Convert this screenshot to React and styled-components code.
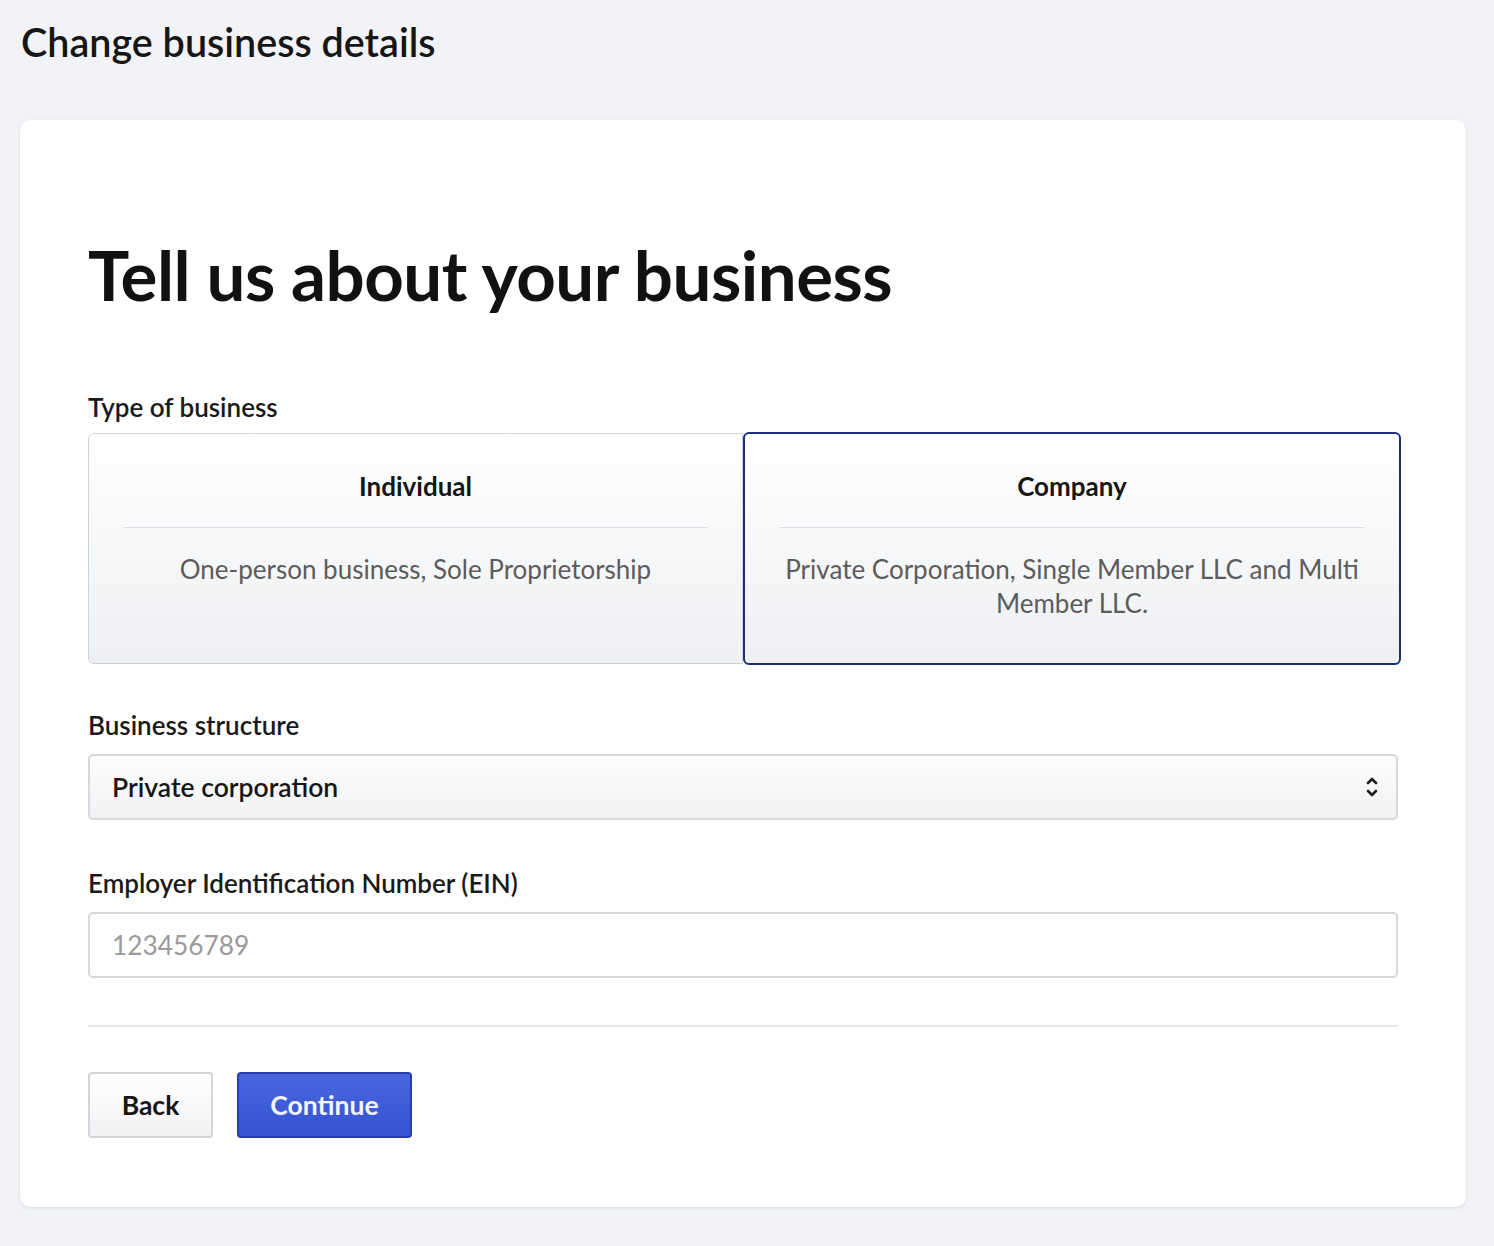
import React, { useState } from 'react';
import styled, { createGlobalStyle } from 'styled-components';

const GlobalStyle = createGlobalStyle`
  html, body {
    margin: 0;
    padding: 0;
    background: #f1f3f6;
    font-family: Lato, "Liberation Sans", sans-serif;
    color: #111;
  }
`;

const Page = styled.div`
  padding: 18px 28px 40px 20px;
`;

const PageTitle = styled.h1`
  margin: 0 0 54px 1px;
  font-size: 39.5px;
  line-height: 48px;
  font-weight: 600;
  color: #161616;
`;

const Card = styled.div`
  background: #fff;
  border-radius: 10px;
  box-shadow: 0 1px 3px rgba(20, 30, 50, 0.12);
  padding: 115px 68px 69px 68px;
`;

const Heading = styled.h2`
  margin: 0 0 76px 0;
  font-size: 69px;
  line-height: 80px;
  font-weight: 700;
  letter-spacing: -0.5px;
  color: #111;
`;

const Label = styled.div`
  font-size: 26px;
  line-height: 32px;
  font-weight: 600;
  color: #1a1a1a;
  margin-bottom: ${p => p.$gap || 13}px;
`;

const Options = styled.div`
  display: grid;
  grid-template-columns: 655px 658px;
  margin-bottom: 44px;
`;

const Option = styled.div`
  height: 231px;
  box-sizing: border-box;
  padding: 37px 34px 0 34px;
  text-align: center;
  background: linear-gradient(#ffffff, #eef0f3);
  border: ${p => (p.$active ? '2px solid #1c2e7e' : '1px solid #cfd2d6')};
  border-radius: ${p => (p.$active ? '6px' : '6px 0 0 6px')};
  ${p => (p.$active ? 'margin-top: -1px; height: 233px;' : '')}
  cursor: pointer;
`;

const OptionTitle = styled.div`
  font-size: 26px;
  line-height: 30px;
  font-weight: 700;
  color: #161616;
  padding-bottom: 26px;
  border-bottom: 1px solid #dcdee2;
`;

const OptionText = styled.div`
  margin-top: 24px;
  font-size: 26px;
  line-height: 34px;
  color: #5c5c5c;
`;

const Field = styled.div`
  margin-bottom: 47px;
  width: 1310px;
`;

const SelectBox = styled.div`
  display: flex;
  align-items: center;
  justify-content: space-between;
  height: 66px;
  box-sizing: border-box;
  padding: 0 16px 0 22px;
  border: 2px solid #d6d8dc;
  border-radius: 5px;
  background: linear-gradient(#fdfdfd, #f1f2f4);
  font-size: 26.5px;
  font-weight: 600;
  color: #161616;
`;

const Input = styled.div`
  height: 66px;
  box-sizing: border-box;
  padding: 0 22px;
  display: flex;
  align-items: center;
  border: 2px solid #d6d8dc;
  border-radius: 5px;
  background: #fff;
  font-size: 26.3px;
  color: #9a9a9a;
`;

const Divider = styled.hr`
  width: 1310px;
  margin: 0 0 45px 0;
  border: 0;
  border-top: 2px solid #e6e8eb;
`;

const Actions = styled.div`
  display: flex;
  gap: 24px;
`;

const Button = styled.button`
  height: 66px;
  padding: 0 30px;
  min-width: ${p => (p.$primary ? '175px' : '125px')};
  border-radius: 4px;
  font-family: inherit;
  font-size: 26.5px;
  font-weight: 700;
  cursor: pointer;
  color: ${p => (p.$primary ? '#f2f5ff' : '#161616')};
  background: ${p => (p.$primary ? 'linear-gradient(#4766de, #3553d2)' : 'linear-gradient(#ffffff, #f1f2f4)')};
  border: ${p => (p.$primary ? '2px solid #2a3fae' : '2px solid #d3d5d9')};
`;

const Chevrons = () => (
  <svg width="16" height="26" viewBox="0 0 16 26" fill="none" stroke="#222" strokeWidth="2.6" strokeLinecap="round" strokeLinejoin="round">
    <path d="M4 9 L8 5 L12 9" />
    <path d="M4 17 L8 21 L12 17" />
  </svg>
);

export default function App() {
  const [type, setType] = useState('company');
  return (
    <>
      <GlobalStyle />
      <Page>
        <PageTitle>Change business details</PageTitle>
        <Card>
          <Heading>Tell us about your business</Heading>
          <Label $gap={10}>Type of business</Label>
          <Options>
            <Option $active={type === 'individual'} onClick={() => setType('individual')}>
              <OptionTitle>Individual</OptionTitle>
              <OptionText>One-person business, Sole Proprietorship</OptionText>
            </Option>
            <Option $active={type === 'company'} onClick={() => setType('company')}>
              <OptionTitle>Company</OptionTitle>
              <OptionText>Private Corporation, Single Member LLC and Multi Member LLC.</OptionText>
            </Option>
          </Options>
          <Field>
            <Label>Business structure</Label>
            <SelectBox>
              <span>Private corporation</span>
              <Chevrons />
            </SelectBox>
          </Field>
          <Field>
            <Label>Employer Identification Number (EIN)</Label>
            <Input>123456789</Input>
          </Field>
          <Divider />
          <Actions>
            <Button>Back</Button>
            <Button $primary>Continue</Button>
          </Actions>
        </Card>
      </Page>
    </>
  );
}
